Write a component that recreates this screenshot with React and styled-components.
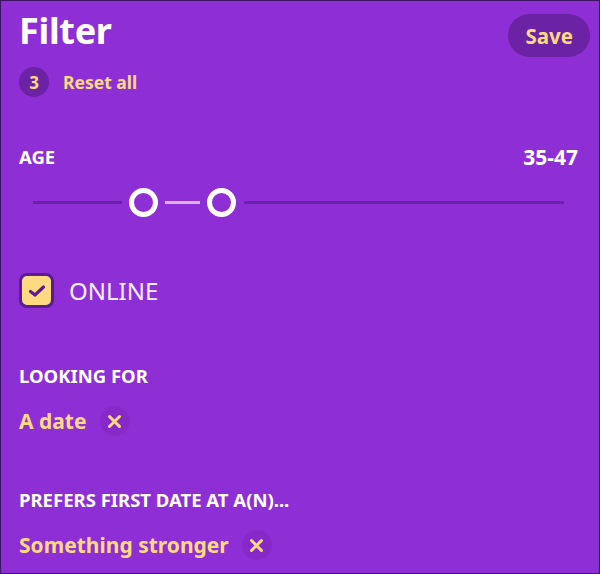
import styled, { createGlobalStyle } from 'styled-components';

const GlobalStyle = createGlobalStyle`
  html, body {
    margin: 0;
    padding: 0;
    background: #8e2fd5;
  }
  * {
    box-sizing: border-box;
  }
`;

const YELLOW = '#fdda82';
const DARK = '#6c22a4';

export default function App() {
  return (
    <>
      <GlobalStyle />
      <Panel>
        <Header>
          <div>
            <Title>Filter</Title>
            <ResetRow>
              <CountBadge>3</CountBadge>
              <ResetLink>Reset all</ResetLink>
            </ResetRow>
          </div>
          <SaveButton>Save</SaveButton>
        </Header>

        <LabelRow>
          <Label>AGE</Label>
          <RangeValue>35-47</RangeValue>
        </LabelRow>
        <Slider>
          <Track $width={89} />
          <Thumb />
          <ActiveTrack />
          <Thumb />
          <Track $grow />
        </Slider>

        <CheckRow>
          <CheckBox>
            <svg width="20" height="16" viewBox="0 0 20 16">
              <path d="M3.5 8.5 L8 12 L16.5 4" fill="none" stroke="#5a1d8c" strokeWidth="3.2" strokeLinecap="round" strokeLinejoin="round" />
            </svg>
          </CheckBox>
          <CheckLabel>ONLINE</CheckLabel>
        </CheckRow>

        <Section>
          <Label>LOOKING FOR</Label>
          <Chip>
            <ChipText>A date</ChipText>
            <RemoveButton>
              <CloseIcon />
            </RemoveButton>
          </Chip>
        </Section>

        <Section>
          <Label>PREFERS FIRST DATE AT A(N)...</Label>
          <Chip>
            <ChipText>Something stronger</ChipText>
            <RemoveButton>
              <CloseIcon />
            </RemoveButton>
          </Chip>
        </Section>
      </Panel>
    </>
  );
}

function CloseIcon() {
  return (
    <svg width="15" height="15" viewBox="0 0 15 15">
      <path d="M2.5 2.5 L12.5 12.5 M12.5 2.5 L2.5 12.5" stroke={YELLOW} strokeWidth="3" strokeLinecap="round" />
    </svg>
  );
}

const Panel = styled.div`
  width: 600px;
  height: 574px;
  background: #8e2fd5;
  border: 1px solid #3c1564;
  padding: 10px 9px 0 18px;
  font-family: 'Noto Sans', 'Open Sans', sans-serif;
  color: #fff;
  display: flex;
  flex-direction: column;
  overflow: hidden;
`;

const Header = styled.div`
  display: flex;
  justify-content: space-between;
  align-items: flex-start;
`;

const Title = styled.h1`
  margin: 0;
  font-size: 36px;
  line-height: 40px;
  font-weight: 700;
  letter-spacing: -0.3px;
`;

const ResetRow = styled.div`
  display: flex;
  align-items: center;
  gap: 14px;
  margin-top: 16px;
`;

const CountBadge = styled.span`
  width: 30px;
  height: 30px;
  border-radius: 50%;
  background: ${DARK};
  color: ${YELLOW};
  font-weight: 700;
  font-size: 17px;
  display: flex;
  align-items: center;
  justify-content: center;
`;

const ResetLink = styled.span`
  color: ${YELLOW};
  font-weight: 700;
  font-size: 17.5px;
`;

const SaveButton = styled.button`
  margin-top: 3px;
  height: 43px;
  padding: 0 17px;
  border: none;
  border-radius: 22px;
  background: ${DARK};
  color: ${YELLOW};
  font-family: inherit;
  font-weight: 700;
  font-size: 20.5px;
`;

const LabelRow = styled.div`
  display: flex;
  justify-content: space-between;
  align-items: center;
  height: 30px;
  padding-right: 12px;
  margin-top: 45px;
`;

const Label = styled.div`
  font-weight: 700;
  font-size: 18.5px;
  line-height: 24px;
`;

const RangeValue = styled.div`
  font-weight: 700;
  font-size: 21px;
`;

const Slider = styled.div`
  display: flex;
  align-items: center;
  padding: 0 26px 0 14px;
  margin-top: 15px;
  height: 30px;
`;

const Track = styled.div`
  height: 3px;
  background: #6a20ac;
  width: ${(p) => (p.$grow ? 'auto' : `${p.$width}px`)};
  flex: ${(p) => (p.$grow ? 1 : 'none')};
  margin: ${(p) => (p.$grow ? '0 0 0 8px' : '0 7px 0 0')};
`;

const ActiveTrack = styled.div`
  height: 3px;
  width: 35px;
  background: #d8b2f2;
  margin: 0 7px;
`;

const Thumb = styled.div`
  width: 29px;
  height: 29px;
  border-radius: 50%;
  border: 5px solid #fff;
  background: #8e2fd5;
`;

const CheckRow = styled.div`
  display: flex;
  align-items: center;
  gap: 15px;
  margin-top: 56px;
`;

const CheckBox = styled.div`
  width: 35px;
  height: 35px;
  border-radius: 8px;
  background: ${YELLOW};
  border: 3px solid #5a1d8c;
  display: flex;
  align-items: center;
  justify-content: center;
`;

const CheckLabel = styled.span`
  font-size: 24px;
  line-height: 33px;
  font-weight: 400;
  color: #f6ecff;
`;

const Section = styled.div`
  display: flex;
  flex-direction: column;
  margin-top: 56px;

  & + & {
    margin-top: 52px;
  }
`;

const Chip = styled.div`
  display: flex;
  align-items: center;
  gap: 13px;
  margin-top: 18px;
`;

const ChipText = styled.span`
  color: ${YELLOW};
  font-weight: 700;
  font-size: 21px;
  line-height: 30px;
`;

const RemoveButton = styled.span`
  width: 30px;
  height: 30px;
  border-radius: 50%;
  background: #8729c9;
  display: flex;
  align-items: center;
  justify-content: center;
`;
